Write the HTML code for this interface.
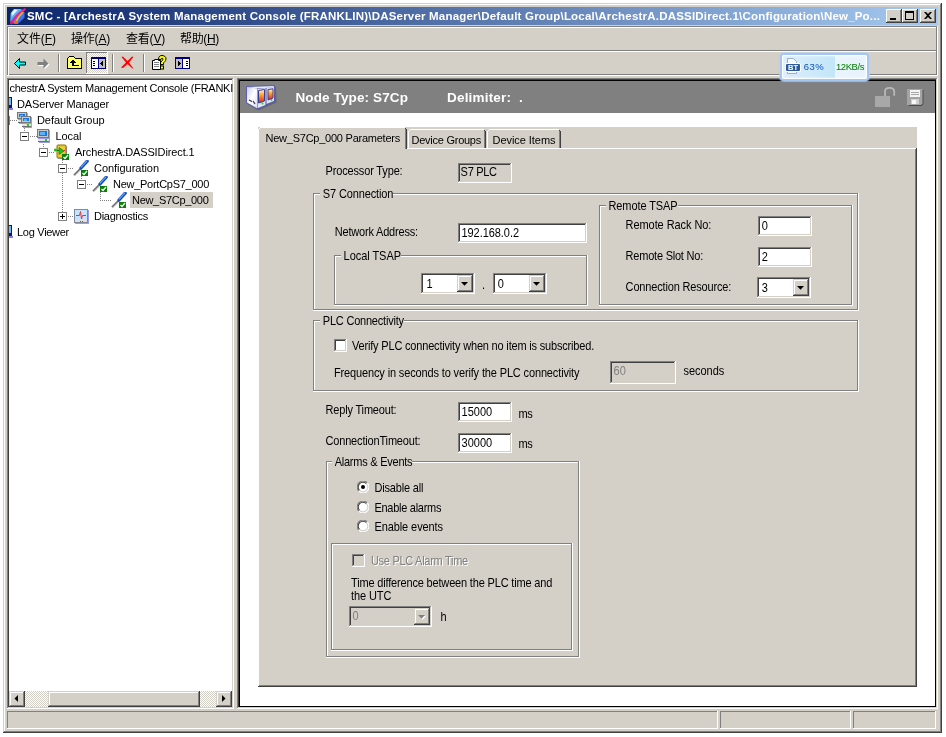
<!DOCTYPE html>
<html lang="zh"><head><meta charset="utf-8"><title>SMC - ArchestrA System Management Console</title>
<style>
html,body{margin:0;padding:0}
body{width:946px;height:737px;background:#fff;overflow:hidden;position:relative;font-family:"Liberation Sans","Noto Sans CJK SC",sans-serif;font-size:11px}
#screen{position:absolute;left:0;top:0;width:946px;height:737px;will-change:transform}
#screen div,#screen span.t,#screen svg{position:absolute}
div{box-sizing:border-box}
span.t{white-space:pre;line-height:16px;height:16px;display:block}
u{text-decoration:underline}
</style></head>
<body>
<div id="screen">
<!-- window frame -->
<div style="left:3px;top:3px;width:939px;height:730px;background:#D4D0C8;"></div>
<div style="left:941px;top:3px;width:1px;height:730px;background:#404040;"></div>
<div style="left:3px;top:732px;width:939px;height:1px;background:#404040;"></div>
<div style="left:940px;top:4px;width:1px;height:728px;background:#808080;"></div>
<div style="left:4px;top:731px;width:937px;height:1px;background:#808080;"></div>
<div style="left:4px;top:4px;width:1px;height:727px;background:#FFFFFF;"></div>
<div style="left:4px;top:4px;width:936px;height:1px;background:#FFFFFF;"></div>
<!-- title bar -->
<div style="left:7px;top:7px;width:931px;height:18px;background:linear-gradient(90deg,#0A246A 0%,#A6CAF0 100%);"></div>
<span class="t" style="left:27px;top:8px;font-size:11.5px;color:#fff;letter-spacing:0.202px;font-weight:bold;">SMC - [ArchestrA System Management Console (FRANKLIN)\DAServer Manager\Default Group\Local\ArchestrA.DASSIDirect.1\Configuration\New_Po...</span>
<svg style="left:9px;top:8px" width="17" height="17" viewBox="0 0 17 17"><defs><linearGradient id="gI" x1="0" y1="0" x2="1" y2="1"><stop offset="0" stop-color="#D8FAFF"/><stop offset="0.3" stop-color="#58C4FA"/><stop offset="0.6" stop-color="#3C80F4"/><stop offset="1" stop-color="#3048D8"/></linearGradient></defs><path d="M1.8 5.1L5 1.1H12.1L15.5 4.7V9.8L9.2 15.7L3 15.5L1.1 14.4Z" fill="url(#gI)"/><path d="M3 5L5.5 2H8.5L3.2 8Z" fill="#fff" opacity=".85"/><path d="M2.3 15.2Q5.5 8 15.6 1.4" fill="none" stroke="#F0208C" stroke-width="2.3" stroke-linecap="round"/><path d="M4.6 14.5Q7.5 8.3 14.5 3.6" fill="none" stroke="#B040E0" stroke-width="0.8"/><path d="M6.6 15Q9 8.5 14 4.3" fill="none" stroke="#F8B820" stroke-width="1.5"/><path d="M5.3 13H8.8V15.8H5.3Z" fill="#FF6A10"/><path d="M1.2 12.8L4.2 13.5L4 16H1.4Z" fill="#D81870"/></svg>
<div style="left:886px;top:9px;width:16px;height:14px;background:#D4D0C8;"></div>
<div style="left:886px;top:22px;width:16px;height:1px;background:#404040;"></div>
<div style="left:901px;top:9px;width:1px;height:14px;background:#404040;"></div>
<div style="left:886px;top:9px;width:15px;height:1px;background:#FFFFFF;"></div>
<div style="left:886px;top:9px;width:1px;height:13px;background:#FFFFFF;"></div>
<div style="left:887px;top:21px;width:14px;height:1px;background:#808080;"></div>
<div style="left:900px;top:10px;width:1px;height:12px;background:#808080;"></div>
<div style="left:887px;top:10px;width:13px;height:1px;background:#D4D0C8;"></div>
<div style="left:887px;top:10px;width:1px;height:11px;background:#D4D0C8;"></div>
<div style="left:902px;top:9px;width:16px;height:14px;background:#D4D0C8;"></div>
<div style="left:902px;top:22px;width:16px;height:1px;background:#404040;"></div>
<div style="left:917px;top:9px;width:1px;height:14px;background:#404040;"></div>
<div style="left:902px;top:9px;width:15px;height:1px;background:#FFFFFF;"></div>
<div style="left:902px;top:9px;width:1px;height:13px;background:#FFFFFF;"></div>
<div style="left:903px;top:21px;width:14px;height:1px;background:#808080;"></div>
<div style="left:916px;top:10px;width:1px;height:12px;background:#808080;"></div>
<div style="left:903px;top:10px;width:13px;height:1px;background:#D4D0C8;"></div>
<div style="left:903px;top:10px;width:1px;height:11px;background:#D4D0C8;"></div>
<div style="left:920px;top:9px;width:16px;height:14px;background:#D4D0C8;"></div>
<div style="left:920px;top:22px;width:16px;height:1px;background:#404040;"></div>
<div style="left:935px;top:9px;width:1px;height:14px;background:#404040;"></div>
<div style="left:920px;top:9px;width:15px;height:1px;background:#FFFFFF;"></div>
<div style="left:920px;top:9px;width:1px;height:13px;background:#FFFFFF;"></div>
<div style="left:921px;top:21px;width:14px;height:1px;background:#808080;"></div>
<div style="left:934px;top:10px;width:1px;height:12px;background:#808080;"></div>
<div style="left:921px;top:10px;width:13px;height:1px;background:#D4D0C8;"></div>
<div style="left:921px;top:10px;width:1px;height:11px;background:#D4D0C8;"></div>
<div style="left:890px;top:18px;width:6px;height:2px;background:#000000;"></div>
<div style="left:905px;top:11px;width:9px;height:9px;background:#000000;"></div>
<div style="left:906px;top:13px;width:7px;height:6px;background:#D4D0C8;"></div>
<svg style="left:924px;top:12px" width="8" height="7" viewBox="0 0 8 7"><path d="M0 0h2l2 2 2-2h2L5 3.5 8 7H6L4 5 2 7H0l3-3.5z" fill="#000"/></svg>
<!-- menu + toolbar -->
<div style="left:7px;top:26px;width:931px;height:1px;background:#808080;"></div>
<div style="left:7px;top:27px;width:931px;height:1px;background:#FFFFFF;"></div>
<div style="left:7px;top:50px;width:931px;height:1px;background:#808080;"></div>
<div style="left:7px;top:51px;width:931px;height:1px;background:#FFFFFF;"></div>
<div style="left:7px;top:74px;width:931px;height:1px;background:#808080;"></div>
<div style="left:7px;top:75px;width:931px;height:1px;background:#FFFFFF;"></div>
<div style="left:7px;top:26px;width:1px;height:49px;background:#808080;"></div>
<div style="left:8px;top:27px;width:1px;height:48px;background:#FFFFFF;"></div>
<div style="left:936px;top:27px;width:1px;height:48px;background:#808080;"></div>
<div style="left:937px;top:26px;width:1px;height:50px;background:#FFFFFF;"></div>
<span class="t" style="left:17px;top:31px;font-size:12px;color:#000;letter-spacing:-0.069px;">文件(<u>F</u>)</span>
<span class="t" style="left:71px;top:31px;font-size:12px;color:#000;letter-spacing:-0.203px;">操作(<u>A</u>)</span>
<span class="t" style="left:126px;top:31px;font-size:12px;color:#000;letter-spacing:-0.203px;">查看(<u>V</u>)</span>
<span class="t" style="left:180px;top:31px;font-size:12px;color:#000;letter-spacing:-0.334px;">帮助(<u>H</u>)</span>
<div style="left:58px;top:54px;width:1px;height:18px;background:#808080;"></div>
<div style="left:59px;top:54px;width:1px;height:18px;background:#FFFFFF;"></div>
<div style="left:112px;top:54px;width:1px;height:18px;background:#808080;"></div>
<div style="left:113px;top:54px;width:1px;height:18px;background:#FFFFFF;"></div>
<div style="left:143px;top:54px;width:1px;height:18px;background:#808080;"></div>
<div style="left:144px;top:54px;width:1px;height:18px;background:#FFFFFF;"></div>
<div style="left:86px;top:52px;width:22px;height:22px;background:#fff;background-image:conic-gradient(#fff 25%,#D4D0C8 0 50%,#fff 0 75%,#D4D0C8 0);background-size:2px 2px"></div>
<div style="left:86px;top:52px;width:22px;height:1px;background:#808080;"></div>
<div style="left:86px;top:52px;width:1px;height:22px;background:#808080;"></div>
<div style="left:86px;top:73px;width:22px;height:1px;background:#FFFFFF;"></div>
<div style="left:107px;top:52px;width:1px;height:22px;background:#FFFFFF;"></div>
<svg style="left:13px;top:57px" width="14" height="12" viewBox="0 0 14 12"><path d="M1.5 6.5L6.5 1.5V5H12.5V8H6.5V11.5Z" fill="#00FFFF" stroke="#000" stroke-width="1"/></svg>
<svg style="left:36px;top:57px" width="15" height="13" viewBox="0 0 15 13"><path d="M13.5 7.5L8.5 2.5V6H2.5V9H8.5V12.5Z" fill="#fff"/><path d="M12.5 6.5L7.5 1.5V5H1.5V8H7.5V11.5Z" fill="#808080"/></svg>
<svg style="left:67px;top:56px" width="16" height="14" viewBox="0 0 16 14" shape-rendering="crispEdges"><path d="M0.5 2.5L2.5 0.5H6.5L8.5 2.5H14.5V12.5H0.5Z" fill="#FFFF66" stroke="#000"/><path d="M3 6.5L6 3.5L9 6.5H7V8.5H12V10H5V6.5Z" fill="#000"/></svg>
<svg style="left:91px;top:57px" width="15" height="12" viewBox="0 0 15 12" shape-rendering="crispEdges"><rect x="0" y="0" width="15" height="12" fill="#000080"/><rect x="1" y="2" width="6" height="9" fill="#fff"/><rect x="8" y="2" width="6" height="9" fill="#C0C0C0"/><rect x="2" y="4" width="2" height="1" fill="#000"/><rect x="2" y="6" width="2" height="1" fill="#000"/><rect x="2" y="8" width="2" height="1" fill="#000"/><path d="M12 3.5V9.5L9 6.5Z" fill="#000"/></svg>
<svg style="left:120px;top:55px" width="15" height="15" viewBox="0 0 15 15"><path d="M1.5 2L3 1.5L7.5 6L12 1.5L13.5 2L9 7.5L13.5 13.5L12.5 13.5L7.5 9L3 13L1 12.5L6 7.5Z" fill="#FF0000"/></svg>
<svg style="left:152px;top:55px" width="15" height="15" viewBox="0 0 15 15"><path d="M0.5 5.5H2.5V4.5H6.5V5.5H8.5V14.5H0.5Z" fill="#fff" stroke="#000"/><rect x="2" y="7" width="5" height="1" fill="#808080"/><rect x="2" y="9" width="5" height="1" fill="#808080"/><rect x="2" y="11" width="5" height="1" fill="#808080"/><path d="M6.5 4.5C6.5 1.5 8 0.5 10 0.5C12.5 0.5 14 2 14 4C14 6 12 7 11.5 8V9.5H8.5V8C8.5 6.5 11 5.5 11 4.2C11 3.5 10.6 3.2 10 3.2C9.3 3.2 9 3.8 9 4.5Z" fill="#FFFF00" stroke="#000"/><rect x="8.5" y="11" width="3" height="3" fill="#FFFF00" stroke="#000"/></svg>
<svg style="left:175px;top:57px" width="15" height="12" viewBox="0 0 15 12" shape-rendering="crispEdges"><rect x="0" y="0" width="15" height="12" fill="#000080"/><rect x="1" y="2" width="6" height="9" fill="#C0C0C0"/><rect x="8" y="2" width="6" height="9" fill="#fff"/><rect x="11" y="4" width="2" height="1" fill="#000"/><rect x="11" y="6" width="2" height="1" fill="#000"/><rect x="11" y="8" width="2" height="1" fill="#000"/><path d="M3 3.5V9.5L6 6.5Z" fill="#000"/></svg>
<!-- console tree -->
<div style="left:7px;top:78px;width:227px;height:631px;background:#FFFFFF;"></div>
<div style="left:7px;top:78px;width:226px;height:1px;background:#808080;"></div>
<div style="left:7px;top:78px;width:1px;height:630px;background:#808080;"></div>
<div style="left:8px;top:79px;width:224px;height:1px;background:#404040;"></div>
<div style="left:8px;top:79px;width:1px;height:628px;background:#404040;"></div>
<div style="left:232px;top:79px;width:1px;height:629px;background:#D4D0C8;"></div>
<div style="left:8px;top:707px;width:225px;height:1px;background:#D4D0C8;"></div>
<div style="left:233px;top:78px;width:1px;height:631px;background:#FFFFFF;"></div>
<div style="left:7px;top:708px;width:227px;height:1px;background:#FFFFFF;"></div>
<div style="left:9px;top:691px;width:223px;height:16px;background:#fff;background-image:conic-gradient(#fff 25%,#D4D0C8 0 50%,#fff 0 75%,#D4D0C8 0);background-size:2px 2px"></div>
<div style="left:9px;top:691px;width:16px;height:16px;background:#D4D0C8;"></div>
<div style="left:9px;top:706px;width:16px;height:1px;background:#404040;"></div>
<div style="left:24px;top:691px;width:1px;height:16px;background:#404040;"></div>
<div style="left:9px;top:691px;width:15px;height:1px;background:#D4D0C8;"></div>
<div style="left:9px;top:691px;width:1px;height:15px;background:#D4D0C8;"></div>
<div style="left:10px;top:705px;width:14px;height:1px;background:#808080;"></div>
<div style="left:23px;top:692px;width:1px;height:14px;background:#808080;"></div>
<div style="left:10px;top:692px;width:13px;height:1px;background:#FFFFFF;"></div>
<div style="left:10px;top:692px;width:1px;height:13px;background:#FFFFFF;"></div>
<div style="left:216px;top:691px;width:16px;height:16px;background:#D4D0C8;"></div>
<div style="left:216px;top:706px;width:16px;height:1px;background:#404040;"></div>
<div style="left:231px;top:691px;width:1px;height:16px;background:#404040;"></div>
<div style="left:216px;top:691px;width:15px;height:1px;background:#D4D0C8;"></div>
<div style="left:216px;top:691px;width:1px;height:15px;background:#D4D0C8;"></div>
<div style="left:217px;top:705px;width:14px;height:1px;background:#808080;"></div>
<div style="left:230px;top:692px;width:1px;height:14px;background:#808080;"></div>
<div style="left:217px;top:692px;width:13px;height:1px;background:#FFFFFF;"></div>
<div style="left:217px;top:692px;width:1px;height:13px;background:#FFFFFF;"></div>
<div style="left:48px;top:691px;width:152px;height:16px;background:#D4D0C8;"></div>
<div style="left:48px;top:706px;width:152px;height:1px;background:#404040;"></div>
<div style="left:199px;top:691px;width:1px;height:16px;background:#404040;"></div>
<div style="left:48px;top:691px;width:151px;height:1px;background:#D4D0C8;"></div>
<div style="left:48px;top:691px;width:1px;height:15px;background:#D4D0C8;"></div>
<div style="left:49px;top:705px;width:150px;height:1px;background:#808080;"></div>
<div style="left:198px;top:692px;width:1px;height:14px;background:#808080;"></div>
<div style="left:49px;top:692px;width:149px;height:1px;background:#FFFFFF;"></div>
<div style="left:49px;top:692px;width:1px;height:13px;background:#FFFFFF;"></div>
<svg style="left:14px;top:695px" width="5" height="8" viewBox="0 0 5 8"><path d="M4 0V7L0.5 3.5Z" fill="#000"/></svg>
<svg style="left:221px;top:695px" width="5" height="8" viewBox="0 0 5 8"><path d="M1 0V7L4.5 3.5Z" fill="#000"/></svg>
<div style="left:130px;top:192px;width:83px;height:16px;background:#D4D0C8;"></div>
<span class="t" style="left:9.5px;top:80px;font-size:11px;color:#000;letter-spacing:-0.260px;width:223px;overflow:hidden;">chestrA System Management Console (FRANKI</span>
<span class="t" style="left:17px;top:96px;font-size:11px;color:#000;letter-spacing:-0.135px;">DAServer Manager</span>
<span class="t" style="left:37px;top:112px;font-size:11px;color:#000;letter-spacing:-0.076px;">Default Group</span>
<span class="t" style="left:55.5px;top:128px;font-size:11px;color:#000;letter-spacing:-0.059px;">Local</span>
<span class="t" style="left:75px;top:144px;font-size:11px;color:#000;letter-spacing:-0.120px;">ArchestrA.DASSIDirect.1</span>
<span class="t" style="left:94px;top:160px;font-size:11px;color:#000;letter-spacing:-0.034px;">Configuration</span>
<span class="t" style="left:113px;top:176px;font-size:11px;color:#000;letter-spacing:-0.269px;">New_PortCpS7_000</span>
<span class="t" style="left:132px;top:192px;font-size:11px;color:#000;letter-spacing:-0.302px;">New_S7Cp_000</span>
<span class="t" style="left:94px;top:208px;font-size:11px;color:#000;letter-spacing:-0.260px;">Diagnostics</span>
<span class="t" style="left:17px;top:224px;font-size:11px;color:#000;letter-spacing:-0.284px;">Log Viewer</span>
<div style="left:10px;top:120px;width:7px;height:1px;background:none;background:repeating-linear-gradient(90deg,#808080 0 1px,transparent 1px 2px)"></div>
<div style="left:9px;top:116px;width:1px;height:9px;background:#808080;"></div>
<div style="left:24px;top:128px;width:1px;height:4px;background:none;background:repeating-linear-gradient(180deg,#808080 0 1px,transparent 1px 2px)"></div>
<div style="left:30px;top:136px;width:7px;height:1px;background:none;background:repeating-linear-gradient(90deg,#808080 0 1px,transparent 1px 2px)"></div>
<div style="left:20px;top:132px;width:9px;height:9px;background:#FFFFFF;border:1px solid #808080"></div>
<div style="left:22px;top:136px;width:5px;height:1px;background:#000000;"></div>
<div style="left:43px;top:144px;width:1px;height:4px;background:none;background:repeating-linear-gradient(180deg,#808080 0 1px,transparent 1px 2px)"></div>
<div style="left:49px;top:152px;width:5px;height:1px;background:none;background:repeating-linear-gradient(90deg,#808080 0 1px,transparent 1px 2px)"></div>
<div style="left:39px;top:148px;width:9px;height:9px;background:#FFFFFF;border:1px solid #808080"></div>
<div style="left:41px;top:152px;width:5px;height:1px;background:#000000;"></div>
<div style="left:62px;top:160px;width:1px;height:4px;background:none;background:repeating-linear-gradient(180deg,#808080 0 1px,transparent 1px 2px)"></div>
<div style="left:68px;top:168px;width:5px;height:1px;background:none;background:repeating-linear-gradient(90deg,#808080 0 1px,transparent 1px 2px)"></div>
<div style="left:58px;top:164px;width:9px;height:9px;background:#FFFFFF;border:1px solid #808080"></div>
<div style="left:60px;top:168px;width:5px;height:1px;background:#000000;"></div>
<div style="left:62px;top:173px;width:1px;height:39px;background:none;background:repeating-linear-gradient(180deg,#808080 0 1px,transparent 1px 2px)"></div>
<div style="left:81px;top:176px;width:1px;height:4px;background:none;background:repeating-linear-gradient(180deg,#808080 0 1px,transparent 1px 2px)"></div>
<div style="left:87px;top:184px;width:5px;height:1px;background:none;background:repeating-linear-gradient(90deg,#808080 0 1px,transparent 1px 2px)"></div>
<div style="left:77px;top:180px;width:9px;height:9px;background:#FFFFFF;border:1px solid #808080"></div>
<div style="left:79px;top:184px;width:5px;height:1px;background:#000000;"></div>
<div style="left:100px;top:192px;width:1px;height:8px;background:none;background:repeating-linear-gradient(180deg,#808080 0 1px,transparent 1px 2px)"></div>
<div style="left:100px;top:200px;width:11px;height:1px;background:none;background:repeating-linear-gradient(90deg,#808080 0 1px,transparent 1px 2px)"></div>
<div style="left:68px;top:216px;width:6px;height:1px;background:none;background:repeating-linear-gradient(90deg,#808080 0 1px,transparent 1px 2px)"></div>
<div style="left:58px;top:212px;width:9px;height:9px;background:#FFFFFF;border:1px solid #808080"></div>
<div style="left:60px;top:216px;width:5px;height:1px;background:#000000;"></div>
<div style="left:62px;top:214px;width:1px;height:5px;background:#000000;"></div>
<svg style="left:9px;top:97px" width="4" height="14" viewBox="0 0 4 14" shape-rendering="crispEdges"><rect x="0" y="0" width="3" height="11" fill="#101080"/><rect x="0" y="1" width="2" height="7" fill="#70B8FF"/><rect x="0" y="11" width="4" height="2" fill="#8080E0"/></svg>
<svg style="left:9px;top:225px" width="4" height="14" viewBox="0 0 4 14" shape-rendering="crispEdges"><rect x="0" y="0" width="3" height="11" fill="#101080"/><rect x="0" y="1" width="2" height="7" fill="#70B8FF"/><rect x="0" y="11" width="4" height="2" fill="#8080E0"/></svg>
<svg style="left:17px;top:112px" width="11" height="12" viewBox="0 0 11 12" shape-rendering="crispEdges"><rect x="1" y="1" width="10" height="8" fill="#9C9CF0"/><rect x="0" y="0" width="10" height="7" fill="#787878"/><rect x="1" y="1" width="8" height="5" fill="#C8C8C8"/><rect x="2" y="2" width="6" height="3" fill="#1878E8"/><rect x="3" y="3" width="3" height="2" fill="#58B4FF"/><rect x="2" y="9" width="9" height="3" fill="#9C9CF0"/><rect x="1" y="8" width="9" height="3" fill="#707070"/><rect x="1" y="8" width="9" height="2" fill="#E4E4E4"/><rect x="6" y="8" width="2" height="2" fill="#20D020"/></svg>
<svg style="left:21px;top:116px" width="11" height="12" viewBox="0 0 11 12" shape-rendering="crispEdges"><rect x="1" y="1" width="10" height="8" fill="#9C9CF0"/><rect x="0" y="0" width="10" height="7" fill="#787878"/><rect x="1" y="1" width="8" height="5" fill="#C8C8C8"/><rect x="2" y="2" width="6" height="3" fill="#1878E8"/><rect x="3" y="3" width="3" height="2" fill="#58B4FF"/><rect x="2" y="9" width="9" height="3" fill="#9C9CF0"/><rect x="1" y="8" width="9" height="3" fill="#707070"/><rect x="1" y="8" width="9" height="2" fill="#E4E4E4"/><rect x="6" y="8" width="2" height="2" fill="#20D020"/></svg>
<svg style="left:37px;top:129px" width="14" height="14" viewBox="0 0 14 14" shape-rendering="crispEdges"><rect x="1" y="1" width="12" height="10" fill="#9C9CF0"/><rect x="0" y="0" width="12" height="9" fill="#787878"/><rect x="1" y="1" width="10" height="7" fill="#C8C8C8"/><rect x="2" y="2" width="8" height="5" fill="#1878E8"/><rect x="3" y="3" width="5" height="3" fill="#58B4FF"/><rect x="2" y="11" width="11" height="3" fill="#9C9CF0"/><rect x="1" y="10" width="11" height="3" fill="#707070"/><rect x="1" y="10" width="11" height="2" fill="#E4E4E4"/><rect x="8" y="10" width="2" height="2" fill="#20D020"/></svg>
<svg style="left:54px;top:144px" width="16" height="16" viewBox="0 0 16 16"><rect x="4" y="2" width="9" height="13" rx="1" fill="#9C9CF0"/><rect x="3" y="1" width="9" height="13" rx="1" fill="#EACB34" stroke="#8C6C00" stroke-width="1"/><path d="M5 3.5V10.5L10 7Z" fill="#20C020" stroke="#107010" stroke-width="0.6"/><circle cx="1.5" cy="6" r="1.6" fill="#20C020"/><rect x="3" y="6" width="2" height="1" fill="#107010"/><rect x="10" y="6" width="1" height="1" fill="#F02020"/><rect x="8" y="10" width="7" height="6" fill="#088008"/><path d="M9.5 13L11 14.5L14 11" stroke="#fff" stroke-width="1.3" fill="none"/></svg>
<svg style="left:73px;top:160px" width="16" height="16" viewBox="0 0 16 16"><path d="M1 15.5L8 8.5" stroke="#D0D0D0" stroke-width="2.6"/><path d="M1 15L8 8" stroke="#707070" stroke-width="1.4"/><path d="M8 8L14.2 1.2" stroke="#1848B0" stroke-width="3.2" stroke-linecap="round"/><path d="M8.2 7L13.8 1" stroke="#58A0F8" stroke-width="1.2" stroke-linecap="round"/><rect x="8" y="10" width="7" height="6" fill="#088008"/><path d="M9.5 13L11 14.5L14 11" stroke="#fff" stroke-width="1.3" fill="none"/></svg>
<svg style="left:92px;top:176px" width="16" height="16" viewBox="0 0 16 16"><path d="M1 15.5L8 8.5" stroke="#D0D0D0" stroke-width="2.6"/><path d="M1 15L8 8" stroke="#707070" stroke-width="1.4"/><path d="M8 8L14.2 1.2" stroke="#1848B0" stroke-width="3.2" stroke-linecap="round"/><path d="M8.2 7L13.8 1" stroke="#58A0F8" stroke-width="1.2" stroke-linecap="round"/><rect x="8" y="10" width="7" height="6" fill="#088008"/><path d="M9.5 13L11 14.5L14 11" stroke="#fff" stroke-width="1.3" fill="none"/></svg>
<svg style="left:111px;top:192px" width="16" height="16" viewBox="0 0 16 16"><path d="M1 15.5L8 8.5" stroke="#D0D0D0" stroke-width="2.6"/><path d="M1 15L8 8" stroke="#707070" stroke-width="1.4"/><path d="M8 8L14.2 1.2" stroke="#1848B0" stroke-width="3.2" stroke-linecap="round"/><path d="M8.2 7L13.8 1" stroke="#58A0F8" stroke-width="1.2" stroke-linecap="round"/><rect x="8" y="10" width="7" height="6" fill="#088008"/><path d="M9.5 13L11 14.5L14 11" stroke="#fff" stroke-width="1.3" fill="none"/></svg>
<svg style="left:74px;top:209px" width="15" height="15" viewBox="0 0 15 15" shape-rendering="crispEdges"><rect x="1" y="1" width="14" height="14" fill="#9C9CF0"/><rect x="0" y="0" width="14" height="14" fill="#8088A0"/><rect x="1" y="1" width="12" height="10" fill="#C4E4FF"/><rect x="1" y="11" width="12" height="2" fill="#E0E0E0"/><rect x="6" y="12" width="1" height="1" fill="#20A020"/><rect x="8" y="12" width="1" height="1" fill="#E02020"/><path d="M2 6.5H5.5L6.5 2.5L7.5 10L8.5 6.5H12" stroke="#F03030" stroke-width="1" fill="none" shape-rendering="auto"/></svg>
<!-- result pane -->
<div style="left:237px;top:78px;width:701px;height:631px;background:#FFFFFF;"></div>
<div style="left:237px;top:78px;width:700px;height:1px;background:#808080;"></div>
<div style="left:237px;top:78px;width:1px;height:630px;background:#808080;"></div>
<div style="left:238px;top:79px;width:698px;height:1px;background:#404040;"></div>
<div style="left:238px;top:79px;width:1px;height:628px;background:#404040;"></div>
<div style="left:239px;top:80px;width:697px;height:1px;background:#000000;"></div>
<div style="left:239px;top:80px;width:1px;height:627px;background:#000000;"></div>
<div style="left:935px;top:80px;width:1px;height:627px;background:#000000;"></div>
<div style="left:239px;top:706px;width:697px;height:1px;background:#000000;"></div>
<div style="left:936px;top:79px;width:1px;height:629px;background:#D4D0C8;"></div>
<div style="left:238px;top:707px;width:699px;height:1px;background:#D4D0C8;"></div>
<div style="left:937px;top:78px;width:1px;height:631px;background:#FFFFFF;"></div>
<div style="left:237px;top:708px;width:701px;height:1px;background:#FFFFFF;"></div>
<div style="left:240px;top:81px;width:695px;height:32px;background:#808080;"></div>
<svg style="left:245px;top:84px" width="32" height="27" viewBox="0 0 32 27"><defs><linearGradient id="gL" x1="0" y1="0" x2="1" y2="1"><stop offset="0" stop-color="#C8CCE8"/><stop offset="0.5" stop-color="#FFFFFF"/><stop offset="1" stop-color="#D8DCF0"/></linearGradient><linearGradient id="gD" x1="0" y1="0" x2="0" y2="1"><stop offset="0" stop-color="#FFF8E0"/><stop offset="0.35" stop-color="#FFB030"/><stop offset="1" stop-color="#D82020"/></linearGradient></defs><path d="M3 4L31 3L31.5 18.5L13.5 26.5L2.5 20Z" fill="#505058" opacity=".55"/><path d="M1.5 2.5L29.5 1.5L30 17.5L12.5 25.2L1.5 19Z" fill="#4A4A98" stroke="#6060A8" stroke-width="1"/><path d="M2 3L12 4.5V24.2L2 18.5Z" fill="url(#gL)"/><path d="M2 3L29 2L28 3.5L12 4.5Z" fill="#E8ECFF"/><path d="M12.5 5L20.5 4V21L12.5 24.2Z" fill="#E0E4F8"/><path d="M21.5 4L29 3V17L21.5 20Z" fill="#E0E4F8"/><path d="M13.5 6.5L19.5 5.5V17L13.5 19Z" fill="url(#gD)" stroke="#3C3C90" stroke-width="1"/><path d="M23 5.5L28 4.8V14L23 16Z" fill="url(#gD)" stroke="#3C3C90" stroke-width="1"/><circle cx="17.5" cy="19.5" r="1" fill="#10E010"/><circle cx="26.5" cy="16" r="0.9" fill="#10E010"/><path d="M4 16L7 17.5M8 17L10 20" stroke="#303050" stroke-width="1.2"/></svg>
<span class="t" style="left:295.5px;top:90px;font-size:13.5px;color:#fff;letter-spacing:0.116px;font-weight:bold;">Node Type: S7Cp</span>
<span class="t" style="left:447px;top:90px;font-size:13.5px;color:#fff;letter-spacing:0.190px;font-weight:bold;">Delimiter:  .</span>
<svg style="left:875px;top:87px" width="21" height="20" viewBox="0 0 21 20"><rect x="0" y="9" width="15" height="11" fill="#A8A8A8"/><path d="M10 9V4.5C10 2 11.5 0.9 14.5 0.9C17.5 0.9 19.2 2 19.2 4.5V8.8" fill="none" stroke="#B8B8B8" stroke-width="1.8"/></svg>
<svg style="left:907px;top:89px" width="17" height="17" viewBox="0 0 17 17"><path d="M1.5 1H16.5V15L14.5 17H1.5Z" fill="#4C4C4C"/><path d="M0 0H15.5V14.5L14 16H0Z" fill="#A4A4A4"/><rect x="3" y="1" width="10" height="7" fill="#F4F4F4"/><rect x="4" y="3" width="8" height="1" fill="#A8A8A8"/><rect x="4" y="5" width="8" height="1" fill="#A8A8A8"/><rect x="4" y="10" width="8" height="5" fill="#D0D0D0"/><rect x="5" y="11" width="4" height="4" fill="#F8F8F8"/></svg>
<!-- tab control -->
<div style="left:258px;top:127px;width:659px;height:560px;background:#D4D0C8;"></div>
<div style="left:258px;top:148px;width:658px;height:1px;background:#FFFFFF;"></div>
<div style="left:258px;top:148px;width:1px;height:538px;background:#FFFFFF;"></div>
<div style="left:915px;top:149px;width:1px;height:537px;background:#808080;"></div>
<div style="left:916px;top:148px;width:1px;height:539px;background:#404040;"></div>
<div style="left:259px;top:685px;width:657px;height:1px;background:#808080;"></div>
<div style="left:258px;top:686px;width:659px;height:1px;background:#404040;"></div>
<div style="left:408px;top:129px;width:78px;height:19px;background:#D4D0C8;"></div>
<div style="left:408px;top:131px;width:1px;height:17px;background:#FFFFFF;"></div>
<div style="left:410px;top:129px;width:74px;height:1px;background:#FFFFFF;"></div>
<div style="left:409px;top:130px;width:1px;height:1px;background:#FFFFFF;"></div>
<div style="left:484px;top:131px;width:1px;height:17px;background:#808080;"></div>
<div style="left:485px;top:131px;width:1px;height:17px;background:#404040;"></div>
<div style="left:484px;top:130px;width:1px;height:1px;background:#404040;"></div>
<div style="left:487px;top:129px;width:74px;height:19px;background:#D4D0C8;"></div>
<div style="left:487px;top:131px;width:1px;height:17px;background:#FFFFFF;"></div>
<div style="left:489px;top:129px;width:70px;height:1px;background:#FFFFFF;"></div>
<div style="left:488px;top:130px;width:1px;height:1px;background:#FFFFFF;"></div>
<div style="left:559px;top:131px;width:1px;height:17px;background:#808080;"></div>
<div style="left:560px;top:131px;width:1px;height:17px;background:#404040;"></div>
<div style="left:559px;top:130px;width:1px;height:1px;background:#404040;"></div>
<div style="left:258px;top:127px;width:149px;height:22px;background:#D4D0C8;"></div>
<div style="left:258px;top:129px;width:1px;height:20px;background:#FFFFFF;"></div>
<div style="left:260px;top:127px;width:145px;height:1px;background:#FFFFFF;"></div>
<div style="left:259px;top:128px;width:1px;height:1px;background:#FFFFFF;"></div>
<div style="left:405px;top:129px;width:1px;height:20px;background:#808080;"></div>
<div style="left:406px;top:129px;width:1px;height:20px;background:#404040;"></div>
<div style="left:405px;top:128px;width:1px;height:1px;background:#404040;"></div>
<span class="t" style="left:265.5px;top:130px;font-size:11px;color:#000;letter-spacing:-0.240px;">New_S7Cp_000 Parameters</span>
<span class="t" style="left:411.5px;top:132px;font-size:11px;color:#000;letter-spacing:-0.251px;">Device Groups</span>
<span class="t" style="left:492.5px;top:132px;font-size:11px;color:#000;letter-spacing:-0.048px;">Device Items</span>
<!-- parameters page -->
<span class="t" style="left:325.5px;top:163px;font-size:11px;color:#000;letter-spacing:-0.152px;transform:scaleY(1.1);transform-origin:0 12px;">Processor Type:</span>
<div style="left:458px;top:163px;width:54px;height:20px;background:#D4D0C8;"></div>
<div style="left:458px;top:182px;width:54px;height:1px;background:#FFFFFF;"></div>
<div style="left:511px;top:163px;width:1px;height:20px;background:#FFFFFF;"></div>
<div style="left:458px;top:163px;width:53px;height:1px;background:#808080;"></div>
<div style="left:458px;top:163px;width:1px;height:19px;background:#808080;"></div>
<div style="left:459px;top:181px;width:52px;height:1px;background:#D4D0C8;"></div>
<div style="left:510px;top:164px;width:1px;height:18px;background:#D4D0C8;"></div>
<div style="left:459px;top:164px;width:51px;height:1px;background:#404040;"></div>
<div style="left:459px;top:164px;width:1px;height:17px;background:#404040;"></div>
<span class="t" style="left:460.6px;top:164px;font-size:11px;color:#000;letter-spacing:-0.287px;transform:scaleY(1.1);transform-origin:0 12px;">S7 PLC</span>
<div style="left:314px;top:194px;width:544px;height:1px;background:#FFFFFF;"></div>
<div style="left:314px;top:194px;width:1px;height:116px;background:#FFFFFF;"></div>
<div style="left:313px;top:310px;width:546px;height:1px;background:#FFFFFF;"></div>
<div style="left:858px;top:193px;width:1px;height:118px;background:#FFFFFF;"></div>
<div style="left:313px;top:193px;width:545px;height:1px;background:#808080;"></div>
<div style="left:313px;top:193px;width:1px;height:117px;background:#808080;"></div>
<div style="left:313px;top:309px;width:545px;height:1px;background:#808080;"></div>
<div style="left:857px;top:193px;width:1px;height:117px;background:#808080;"></div>
<span class="t" style="left:320.8px;top:186px;font-size:11px;color:#000;letter-spacing:-0.136px;background:#D4D0C8;padding:0 0px 0 3px;margin-left:-1px;transform:scaleY(1.1);transform-origin:0 12px;">S7 Connection</span>
<span class="t" style="left:334.7px;top:224px;font-size:11px;color:#000;letter-spacing:-0.181px;transform:scaleY(1.1);transform-origin:0 12px;">Network Address:</span>
<div style="left:458px;top:223px;width:129px;height:20px;background:#FFFFFF;"></div>
<div style="left:458px;top:242px;width:129px;height:1px;background:#FFFFFF;"></div>
<div style="left:586px;top:223px;width:1px;height:20px;background:#FFFFFF;"></div>
<div style="left:458px;top:223px;width:128px;height:1px;background:#808080;"></div>
<div style="left:458px;top:223px;width:1px;height:19px;background:#808080;"></div>
<div style="left:459px;top:241px;width:127px;height:1px;background:#D4D0C8;"></div>
<div style="left:585px;top:224px;width:1px;height:18px;background:#D4D0C8;"></div>
<div style="left:459px;top:224px;width:126px;height:1px;background:#404040;"></div>
<div style="left:459px;top:224px;width:1px;height:17px;background:#404040;"></div>
<span class="t" style="left:461.5px;top:225px;font-size:11px;color:#000;letter-spacing:-0.057px;transform:scaleY(1.1);transform-origin:0 12px;">192.168.0.2</span>
<div style="left:335px;top:256px;width:252px;height:1px;background:#FFFFFF;"></div>
<div style="left:335px;top:256px;width:1px;height:49px;background:#FFFFFF;"></div>
<div style="left:334px;top:305px;width:254px;height:1px;background:#FFFFFF;"></div>
<div style="left:587px;top:255px;width:1px;height:51px;background:#FFFFFF;"></div>
<div style="left:334px;top:255px;width:253px;height:1px;background:#808080;"></div>
<div style="left:334px;top:255px;width:1px;height:50px;background:#808080;"></div>
<div style="left:334px;top:304px;width:253px;height:1px;background:#808080;"></div>
<div style="left:586px;top:255px;width:1px;height:50px;background:#808080;"></div>
<span class="t" style="left:341.6px;top:248px;font-size:11px;color:#000;letter-spacing:-0.049px;background:#D4D0C8;padding:0 0px 0 3px;margin-left:-1px;transform:scaleY(1.1);transform-origin:0 12px;">Local TSAP</span>
<div style="left:421px;top:273px;width:54px;height:21px;background:#FFFFFF;"></div>
<div style="left:421px;top:293px;width:54px;height:1px;background:#FFFFFF;"></div>
<div style="left:474px;top:273px;width:1px;height:21px;background:#FFFFFF;"></div>
<div style="left:421px;top:273px;width:53px;height:1px;background:#808080;"></div>
<div style="left:421px;top:273px;width:1px;height:20px;background:#808080;"></div>
<div style="left:422px;top:292px;width:52px;height:1px;background:#D4D0C8;"></div>
<div style="left:473px;top:274px;width:1px;height:19px;background:#D4D0C8;"></div>
<div style="left:422px;top:274px;width:51px;height:1px;background:#404040;"></div>
<div style="left:422px;top:274px;width:1px;height:18px;background:#404040;"></div>
<div style="left:457px;top:275px;width:16px;height:17px;background:#D4D0C8;"></div>
<div style="left:457px;top:291px;width:16px;height:1px;background:#404040;"></div>
<div style="left:472px;top:275px;width:1px;height:17px;background:#404040;"></div>
<div style="left:457px;top:275px;width:15px;height:1px;background:#D4D0C8;"></div>
<div style="left:457px;top:275px;width:1px;height:16px;background:#D4D0C8;"></div>
<div style="left:458px;top:290px;width:14px;height:1px;background:#808080;"></div>
<div style="left:471px;top:276px;width:1px;height:15px;background:#808080;"></div>
<div style="left:458px;top:276px;width:13px;height:1px;background:#FFFFFF;"></div>
<div style="left:458px;top:276px;width:1px;height:14px;background:#FFFFFF;"></div>
<svg style="left:461px;top:282px" width="7" height="4" viewBox="0 0 7 4"><path d="M0 0H7L3.5 3.8Z" fill="#000"/></svg>
<span class="t" style="left:426.4px;top:276px;font-size:11px;color:#000;transform:scaleY(1.1);transform-origin:0 12px;">1</span>
<span class="t" style="left:482px;top:277px;font-size:11px;color:#000;transform:scaleY(1.1);transform-origin:0 12px;">.</span>
<div style="left:493px;top:273px;width:54px;height:21px;background:#FFFFFF;"></div>
<div style="left:493px;top:293px;width:54px;height:1px;background:#FFFFFF;"></div>
<div style="left:546px;top:273px;width:1px;height:21px;background:#FFFFFF;"></div>
<div style="left:493px;top:273px;width:53px;height:1px;background:#808080;"></div>
<div style="left:493px;top:273px;width:1px;height:20px;background:#808080;"></div>
<div style="left:494px;top:292px;width:52px;height:1px;background:#D4D0C8;"></div>
<div style="left:545px;top:274px;width:1px;height:19px;background:#D4D0C8;"></div>
<div style="left:494px;top:274px;width:51px;height:1px;background:#404040;"></div>
<div style="left:494px;top:274px;width:1px;height:18px;background:#404040;"></div>
<div style="left:529px;top:275px;width:16px;height:17px;background:#D4D0C8;"></div>
<div style="left:529px;top:291px;width:16px;height:1px;background:#404040;"></div>
<div style="left:544px;top:275px;width:1px;height:17px;background:#404040;"></div>
<div style="left:529px;top:275px;width:15px;height:1px;background:#D4D0C8;"></div>
<div style="left:529px;top:275px;width:1px;height:16px;background:#D4D0C8;"></div>
<div style="left:530px;top:290px;width:14px;height:1px;background:#808080;"></div>
<div style="left:543px;top:276px;width:1px;height:15px;background:#808080;"></div>
<div style="left:530px;top:276px;width:13px;height:1px;background:#FFFFFF;"></div>
<div style="left:530px;top:276px;width:1px;height:14px;background:#FFFFFF;"></div>
<svg style="left:533px;top:282px" width="7" height="4" viewBox="0 0 7 4"><path d="M0 0H7L3.5 3.8Z" fill="#000"/></svg>
<span class="t" style="left:497.7px;top:276px;font-size:11px;color:#000;transform:scaleY(1.1);transform-origin:0 12px;">0</span>
<div style="left:600px;top:206px;width:252px;height:1px;background:#FFFFFF;"></div>
<div style="left:600px;top:206px;width:1px;height:99px;background:#FFFFFF;"></div>
<div style="left:599px;top:305px;width:254px;height:1px;background:#FFFFFF;"></div>
<div style="left:852px;top:205px;width:1px;height:101px;background:#FFFFFF;"></div>
<div style="left:599px;top:205px;width:253px;height:1px;background:#808080;"></div>
<div style="left:599px;top:205px;width:1px;height:100px;background:#808080;"></div>
<div style="left:599px;top:304px;width:253px;height:1px;background:#808080;"></div>
<div style="left:851px;top:205px;width:1px;height:100px;background:#808080;"></div>
<span class="t" style="left:606.5px;top:198px;font-size:11px;color:#000;letter-spacing:-0.101px;background:#D4D0C8;padding:0 0px 0 3px;margin-left:-1px;transform:scaleY(1.1);transform-origin:0 12px;">Remote TSAP</span>
<span class="t" style="left:625.6px;top:217px;font-size:11px;color:#000;letter-spacing:-0.074px;transform:scaleY(1.1);transform-origin:0 12px;">Remote Rack No:</span>
<span class="t" style="left:625.6px;top:248px;font-size:11px;color:#000;letter-spacing:-0.220px;transform:scaleY(1.1);transform-origin:0 12px;">Remote Slot No:</span>
<span class="t" style="left:625.6px;top:279px;font-size:11px;color:#000;letter-spacing:-0.162px;transform:scaleY(1.1);transform-origin:0 12px;">Connection Resource:</span>
<div style="left:758px;top:216px;width:54px;height:20px;background:#FFFFFF;"></div>
<div style="left:758px;top:235px;width:54px;height:1px;background:#FFFFFF;"></div>
<div style="left:811px;top:216px;width:1px;height:20px;background:#FFFFFF;"></div>
<div style="left:758px;top:216px;width:53px;height:1px;background:#808080;"></div>
<div style="left:758px;top:216px;width:1px;height:19px;background:#808080;"></div>
<div style="left:759px;top:234px;width:52px;height:1px;background:#D4D0C8;"></div>
<div style="left:810px;top:217px;width:1px;height:18px;background:#D4D0C8;"></div>
<div style="left:759px;top:217px;width:51px;height:1px;background:#404040;"></div>
<div style="left:759px;top:217px;width:1px;height:17px;background:#404040;"></div>
<span class="t" style="left:761.7px;top:218px;font-size:11px;color:#000;transform:scaleY(1.1);transform-origin:0 12px;">0</span>
<div style="left:758px;top:247px;width:54px;height:20px;background:#FFFFFF;"></div>
<div style="left:758px;top:266px;width:54px;height:1px;background:#FFFFFF;"></div>
<div style="left:811px;top:247px;width:1px;height:20px;background:#FFFFFF;"></div>
<div style="left:758px;top:247px;width:53px;height:1px;background:#808080;"></div>
<div style="left:758px;top:247px;width:1px;height:19px;background:#808080;"></div>
<div style="left:759px;top:265px;width:52px;height:1px;background:#D4D0C8;"></div>
<div style="left:810px;top:248px;width:1px;height:18px;background:#D4D0C8;"></div>
<div style="left:759px;top:248px;width:51px;height:1px;background:#404040;"></div>
<div style="left:759px;top:248px;width:1px;height:17px;background:#404040;"></div>
<span class="t" style="left:761.7px;top:249px;font-size:11px;color:#000;transform:scaleY(1.1);transform-origin:0 12px;">2</span>
<div style="left:757px;top:277px;width:54px;height:21px;background:#FFFFFF;"></div>
<div style="left:757px;top:297px;width:54px;height:1px;background:#FFFFFF;"></div>
<div style="left:810px;top:277px;width:1px;height:21px;background:#FFFFFF;"></div>
<div style="left:757px;top:277px;width:53px;height:1px;background:#808080;"></div>
<div style="left:757px;top:277px;width:1px;height:20px;background:#808080;"></div>
<div style="left:758px;top:296px;width:52px;height:1px;background:#D4D0C8;"></div>
<div style="left:809px;top:278px;width:1px;height:19px;background:#D4D0C8;"></div>
<div style="left:758px;top:278px;width:51px;height:1px;background:#404040;"></div>
<div style="left:758px;top:278px;width:1px;height:18px;background:#404040;"></div>
<div style="left:793px;top:279px;width:16px;height:17px;background:#D4D0C8;"></div>
<div style="left:793px;top:295px;width:16px;height:1px;background:#404040;"></div>
<div style="left:808px;top:279px;width:1px;height:17px;background:#404040;"></div>
<div style="left:793px;top:279px;width:15px;height:1px;background:#D4D0C8;"></div>
<div style="left:793px;top:279px;width:1px;height:16px;background:#D4D0C8;"></div>
<div style="left:794px;top:294px;width:14px;height:1px;background:#808080;"></div>
<div style="left:807px;top:280px;width:1px;height:15px;background:#808080;"></div>
<div style="left:794px;top:280px;width:13px;height:1px;background:#FFFFFF;"></div>
<div style="left:794px;top:280px;width:1px;height:14px;background:#FFFFFF;"></div>
<svg style="left:797px;top:286px" width="7" height="4" viewBox="0 0 7 4"><path d="M0 0H7L3.5 3.8Z" fill="#000"/></svg>
<span class="t" style="left:761.7px;top:280px;font-size:11px;color:#000;transform:scaleY(1.1);transform-origin:0 12px;">3</span>
<div style="left:314px;top:321px;width:544px;height:1px;background:#FFFFFF;"></div>
<div style="left:314px;top:321px;width:1px;height:70px;background:#FFFFFF;"></div>
<div style="left:313px;top:391px;width:546px;height:1px;background:#FFFFFF;"></div>
<div style="left:858px;top:320px;width:1px;height:72px;background:#FFFFFF;"></div>
<div style="left:313px;top:320px;width:545px;height:1px;background:#808080;"></div>
<div style="left:313px;top:320px;width:1px;height:71px;background:#808080;"></div>
<div style="left:313px;top:390px;width:545px;height:1px;background:#808080;"></div>
<div style="left:857px;top:320px;width:1px;height:71px;background:#808080;"></div>
<span class="t" style="left:320.8px;top:313px;font-size:11px;color:#000;letter-spacing:-0.211px;background:#D4D0C8;padding:0 0px 0 3px;margin-left:-1px;transform:scaleY(1.1);transform-origin:0 12px;">PLC Connectivity</span>
<div style="left:334px;top:339px;width:13px;height:13px;background:#FFFFFF;"></div>
<div style="left:334px;top:351px;width:13px;height:1px;background:#FFFFFF;"></div>
<div style="left:346px;top:339px;width:1px;height:13px;background:#FFFFFF;"></div>
<div style="left:334px;top:339px;width:12px;height:1px;background:#808080;"></div>
<div style="left:334px;top:339px;width:1px;height:12px;background:#808080;"></div>
<div style="left:335px;top:350px;width:11px;height:1px;background:#D4D0C8;"></div>
<div style="left:345px;top:340px;width:1px;height:11px;background:#D4D0C8;"></div>
<div style="left:335px;top:340px;width:10px;height:1px;background:#404040;"></div>
<div style="left:335px;top:340px;width:1px;height:10px;background:#404040;"></div>
<span class="t" style="left:352px;top:338px;font-size:11px;color:#000;letter-spacing:-0.182px;transform:scaleY(1.1);transform-origin:0 12px;">Verify PLC connectivity when no item is subscribed.</span>
<span class="t" style="left:334px;top:365px;font-size:11px;color:#000;letter-spacing:-0.140px;transform:scaleY(1.1);transform-origin:0 12px;">Frequency in seconds to verify the PLC connectivity</span>
<div style="left:610px;top:361px;width:66px;height:23px;background:#D4D0C8;"></div>
<div style="left:610px;top:383px;width:66px;height:1px;background:#FFFFFF;"></div>
<div style="left:675px;top:361px;width:1px;height:23px;background:#FFFFFF;"></div>
<div style="left:610px;top:361px;width:65px;height:1px;background:#808080;"></div>
<div style="left:610px;top:361px;width:1px;height:22px;background:#808080;"></div>
<div style="left:611px;top:382px;width:64px;height:1px;background:#D4D0C8;"></div>
<div style="left:674px;top:362px;width:1px;height:21px;background:#D4D0C8;"></div>
<div style="left:611px;top:362px;width:63px;height:1px;background:#404040;"></div>
<div style="left:611px;top:362px;width:1px;height:20px;background:#404040;"></div>
<span class="t" style="left:613.5px;top:363px;font-size:11px;color:#808080;letter-spacing:0.125px;transform:scaleY(1.1);transform-origin:0 12px;">60</span>
<span class="t" style="left:683.5px;top:363px;font-size:11px;color:#000;letter-spacing:-0.041px;transform:scaleY(1.1);transform-origin:0 12px;">seconds</span>
<span class="t" style="left:325.5px;top:402px;font-size:11px;color:#000;letter-spacing:-0.170px;transform:scaleY(1.1);transform-origin:0 12px;">Reply Timeout:</span>
<div style="left:458px;top:402px;width:54px;height:20px;background:#FFFFFF;"></div>
<div style="left:458px;top:421px;width:54px;height:1px;background:#FFFFFF;"></div>
<div style="left:511px;top:402px;width:1px;height:20px;background:#FFFFFF;"></div>
<div style="left:458px;top:402px;width:53px;height:1px;background:#808080;"></div>
<div style="left:458px;top:402px;width:1px;height:19px;background:#808080;"></div>
<div style="left:459px;top:420px;width:52px;height:1px;background:#D4D0C8;"></div>
<div style="left:510px;top:403px;width:1px;height:18px;background:#D4D0C8;"></div>
<div style="left:459px;top:403px;width:51px;height:1px;background:#404040;"></div>
<div style="left:459px;top:403px;width:1px;height:17px;background:#404040;"></div>
<span class="t" style="left:461.5px;top:404px;font-size:11px;color:#000;letter-spacing:0.021px;transform:scaleY(1.1);transform-origin:0 12px;">15000</span>
<span class="t" style="left:518.5px;top:406px;font-size:11px;color:#000;letter-spacing:-0.486px;transform:scaleY(1.1);transform-origin:0 12px;">ms</span>
<span class="t" style="left:325.5px;top:433px;font-size:11px;color:#000;letter-spacing:-0.169px;transform:scaleY(1.1);transform-origin:0 12px;">ConnectionTimeout:</span>
<div style="left:458px;top:433px;width:54px;height:20px;background:#FFFFFF;"></div>
<div style="left:458px;top:452px;width:54px;height:1px;background:#FFFFFF;"></div>
<div style="left:511px;top:433px;width:1px;height:20px;background:#FFFFFF;"></div>
<div style="left:458px;top:433px;width:53px;height:1px;background:#808080;"></div>
<div style="left:458px;top:433px;width:1px;height:19px;background:#808080;"></div>
<div style="left:459px;top:451px;width:52px;height:1px;background:#D4D0C8;"></div>
<div style="left:510px;top:434px;width:1px;height:18px;background:#D4D0C8;"></div>
<div style="left:459px;top:434px;width:51px;height:1px;background:#404040;"></div>
<div style="left:459px;top:434px;width:1px;height:17px;background:#404040;"></div>
<span class="t" style="left:461.5px;top:435px;font-size:11px;color:#000;letter-spacing:0.021px;transform:scaleY(1.1);transform-origin:0 12px;">30000</span>
<span class="t" style="left:518.5px;top:436px;font-size:11px;color:#000;letter-spacing:-0.486px;transform:scaleY(1.1);transform-origin:0 12px;">ms</span>
<div style="left:327px;top:462px;width:252px;height:1px;background:#FFFFFF;"></div>
<div style="left:327px;top:462px;width:1px;height:195px;background:#FFFFFF;"></div>
<div style="left:326px;top:657px;width:254px;height:1px;background:#FFFFFF;"></div>
<div style="left:579px;top:461px;width:1px;height:197px;background:#FFFFFF;"></div>
<div style="left:326px;top:461px;width:253px;height:1px;background:#808080;"></div>
<div style="left:326px;top:461px;width:1px;height:196px;background:#808080;"></div>
<div style="left:326px;top:656px;width:253px;height:1px;background:#808080;"></div>
<div style="left:578px;top:461px;width:1px;height:196px;background:#808080;"></div>
<span class="t" style="left:332.7px;top:454px;font-size:11px;color:#000;letter-spacing:-0.241px;background:#D4D0C8;padding:0 0px 0 3px;margin-left:-1px;transform:scaleY(1.1);transform-origin:0 12px;">Alarms &amp; Events</span>
<svg style="left:357px;top:481px" width="12" height="12" viewBox="0 0 12 12"><circle cx="6" cy="6" r="5.5" fill="#fff"/><path d="M1.8 10.2A5.9 5.9 0 0 1 10.2 1.8" fill="none" stroke="#808080" stroke-width="1.1"/><path d="M2.6 9.4A4.8 4.8 0 0 1 9.4 2.6" fill="none" stroke="#404040" stroke-width="1.1"/><path d="M10.2 1.8A5.9 5.9 0 0 1 1.8 10.2" fill="none" stroke="#fff" stroke-width="1.1"/><path d="M9.4 2.6A4.8 4.8 0 0 1 2.6 9.4" fill="none" stroke="#D4D0C8" stroke-width="1.1"/><circle cx="6" cy="6" r="2" fill="#000"/></svg>
<span class="t" style="left:374.4px;top:480px;font-size:11px;color:#000;letter-spacing:-0.159px;transform:scaleY(1.1);transform-origin:0 12px;">Disable all</span>
<svg style="left:357px;top:501px" width="12" height="12" viewBox="0 0 12 12"><circle cx="6" cy="6" r="5.5" fill="#fff"/><path d="M1.8 10.2A5.9 5.9 0 0 1 10.2 1.8" fill="none" stroke="#808080" stroke-width="1.1"/><path d="M2.6 9.4A4.8 4.8 0 0 1 9.4 2.6" fill="none" stroke="#404040" stroke-width="1.1"/><path d="M10.2 1.8A5.9 5.9 0 0 1 1.8 10.2" fill="none" stroke="#fff" stroke-width="1.1"/><path d="M9.4 2.6A4.8 4.8 0 0 1 2.6 9.4" fill="none" stroke="#D4D0C8" stroke-width="1.1"/></svg>
<span class="t" style="left:374.4px;top:499.5px;font-size:11px;color:#000;letter-spacing:-0.271px;transform:scaleY(1.1);transform-origin:0 12px;">Enable alarms</span>
<svg style="left:357px;top:520px" width="12" height="12" viewBox="0 0 12 12"><circle cx="6" cy="6" r="5.5" fill="#fff"/><path d="M1.8 10.2A5.9 5.9 0 0 1 10.2 1.8" fill="none" stroke="#808080" stroke-width="1.1"/><path d="M2.6 9.4A4.8 4.8 0 0 1 9.4 2.6" fill="none" stroke="#404040" stroke-width="1.1"/><path d="M10.2 1.8A5.9 5.9 0 0 1 1.8 10.2" fill="none" stroke="#fff" stroke-width="1.1"/><path d="M9.4 2.6A4.8 4.8 0 0 1 2.6 9.4" fill="none" stroke="#D4D0C8" stroke-width="1.1"/></svg>
<span class="t" style="left:374.4px;top:519px;font-size:11px;color:#000;letter-spacing:-0.086px;transform:scaleY(1.1);transform-origin:0 12px;">Enable events</span>
<div style="left:332px;top:544px;width:240px;height:1px;background:#FFFFFF;"></div>
<div style="left:332px;top:544px;width:1px;height:106px;background:#FFFFFF;"></div>
<div style="left:331px;top:650px;width:242px;height:1px;background:#FFFFFF;"></div>
<div style="left:572px;top:543px;width:1px;height:108px;background:#FFFFFF;"></div>
<div style="left:331px;top:543px;width:241px;height:1px;background:#808080;"></div>
<div style="left:331px;top:543px;width:1px;height:107px;background:#808080;"></div>
<div style="left:331px;top:649px;width:241px;height:1px;background:#808080;"></div>
<div style="left:571px;top:543px;width:1px;height:107px;background:#808080;"></div>
<div style="left:352px;top:554px;width:13px;height:13px;background:#D4D0C8;"></div>
<div style="left:352px;top:566px;width:13px;height:1px;background:#FFFFFF;"></div>
<div style="left:364px;top:554px;width:1px;height:13px;background:#FFFFFF;"></div>
<div style="left:352px;top:554px;width:12px;height:1px;background:#808080;"></div>
<div style="left:352px;top:554px;width:1px;height:12px;background:#808080;"></div>
<div style="left:353px;top:565px;width:11px;height:1px;background:#D4D0C8;"></div>
<div style="left:363px;top:555px;width:1px;height:11px;background:#D4D0C8;"></div>
<div style="left:353px;top:555px;width:10px;height:1px;background:#404040;"></div>
<div style="left:353px;top:555px;width:1px;height:10px;background:#404040;"></div>
<span class="t" style="left:370.9px;top:552.5px;font-size:11px;color:#808080;letter-spacing:-0.283px;transform:scaleY(1.1);transform-origin:0 12px;text-shadow:1px 1px 0 #fff;">Use PLC Alarm Time</span>
<span class="t" style="left:351px;top:575px;font-size:11px;color:#000;letter-spacing:-0.168px;transform:scaleY(1.1);transform-origin:0 12px;">Time difference between the PLC time and</span>
<span class="t" style="left:351px;top:588px;font-size:11px;color:#000;letter-spacing:-0.096px;transform:scaleY(1.1);transform-origin:0 12px;">the UTC</span>
<div style="left:349px;top:606px;width:83px;height:21px;background:#D4D0C8;"></div>
<div style="left:349px;top:626px;width:83px;height:1px;background:#FFFFFF;"></div>
<div style="left:431px;top:606px;width:1px;height:21px;background:#FFFFFF;"></div>
<div style="left:349px;top:606px;width:82px;height:1px;background:#808080;"></div>
<div style="left:349px;top:606px;width:1px;height:20px;background:#808080;"></div>
<div style="left:350px;top:625px;width:81px;height:1px;background:#D4D0C8;"></div>
<div style="left:430px;top:607px;width:1px;height:19px;background:#D4D0C8;"></div>
<div style="left:350px;top:607px;width:80px;height:1px;background:#404040;"></div>
<div style="left:350px;top:607px;width:1px;height:18px;background:#404040;"></div>
<div style="left:414px;top:608px;width:16px;height:17px;background:#D4D0C8;"></div>
<div style="left:414px;top:624px;width:16px;height:1px;background:#404040;"></div>
<div style="left:429px;top:608px;width:1px;height:17px;background:#404040;"></div>
<div style="left:414px;top:608px;width:15px;height:1px;background:#D4D0C8;"></div>
<div style="left:414px;top:608px;width:1px;height:16px;background:#D4D0C8;"></div>
<div style="left:415px;top:623px;width:14px;height:1px;background:#808080;"></div>
<div style="left:428px;top:609px;width:1px;height:15px;background:#808080;"></div>
<div style="left:415px;top:609px;width:13px;height:1px;background:#FFFFFF;"></div>
<div style="left:415px;top:609px;width:1px;height:14px;background:#FFFFFF;"></div>
<svg style="left:418px;top:615px" width="9" height="6" viewBox="0 0 9 6"><path d="M1 1H8L4.5 4.8Z" fill="#fff"/><path d="M0 0H7L3.5 3.8Z" fill="#808080"/></svg>
<span class="t" style="left:352.4px;top:607.5px;font-size:11px;color:#808080;transform:scaleY(1.1);transform-origin:0 12px;">0</span>
<span class="t" style="left:440.5px;top:609px;font-size:11px;color:#000;transform:scaleY(1.1);transform-origin:0 12px;">h</span>
<!-- status bar -->
<div style="left:7px;top:711px;width:711px;height:1px;background:#808080;"></div>
<div style="left:7px;top:711px;width:1px;height:17px;background:#808080;"></div>
<div style="left:7px;top:728px;width:711px;height:1px;background:#FFFFFF;"></div>
<div style="left:717px;top:711px;width:1px;height:18px;background:#FFFFFF;"></div>
<div style="left:720px;top:711px;width:131px;height:1px;background:#808080;"></div>
<div style="left:720px;top:711px;width:1px;height:17px;background:#808080;"></div>
<div style="left:720px;top:728px;width:131px;height:1px;background:#FFFFFF;"></div>
<div style="left:850px;top:711px;width:1px;height:18px;background:#FFFFFF;"></div>
<div style="left:853px;top:711px;width:83px;height:1px;background:#808080;"></div>
<div style="left:853px;top:711px;width:1px;height:17px;background:#808080;"></div>
<div style="left:853px;top:728px;width:83px;height:1px;background:#FFFFFF;"></div>
<div style="left:935px;top:711px;width:1px;height:18px;background:#FFFFFF;"></div>
<!-- download widget -->
<div style="left:780px;top:53px;width:89px;height:28px;border-radius:4px;background:#A4C6F2;box-shadow:0 0 1px 1px rgba(185,210,245,.7)"></div>
<div style="left:782px;top:55px;width:85px;height:24px;border-radius:2px;background:linear-gradient(90deg,#DDEEFB 0,#C2E6F8 62%,#EAF4FC 62.5%,#E6F2FC 100%);box-shadow:inset 0 0 0 1px rgba(255,255,255,.85),inset 0 0 3px 1px rgba(255,255,255,.7)"></div>
<svg style="left:785px;top:58px" width="17" height="16" viewBox="0 0 17 16"><path d="M2.5 0.5H8.5L11.5 3.5V15.5H2.5Z" fill="#F4F8FC" stroke="#A0B0C8" stroke-width="1"/><rect x="0" y="5" width="16" height="9" rx="1.5" fill="#fff"/><rect x="1" y="6" width="14" height="7" rx="1" fill="#2C5C9C"/><text x="8" y="12.3" font-family="Liberation Sans,sans-serif" font-weight="bold" font-size="7.5" fill="#fff" text-anchor="middle">BT</text></svg>
<span class="t" style="left:803.7px;top:59px;font-size:9.5px;color:#0A50C0;letter-spacing:0.495px;">63%</span>
<span class="t" style="left:836px;top:59px;font-size:9.5px;color:#007C00;letter-spacing:-0.440px;">12KB/s</span>
</div>
</body></html>
